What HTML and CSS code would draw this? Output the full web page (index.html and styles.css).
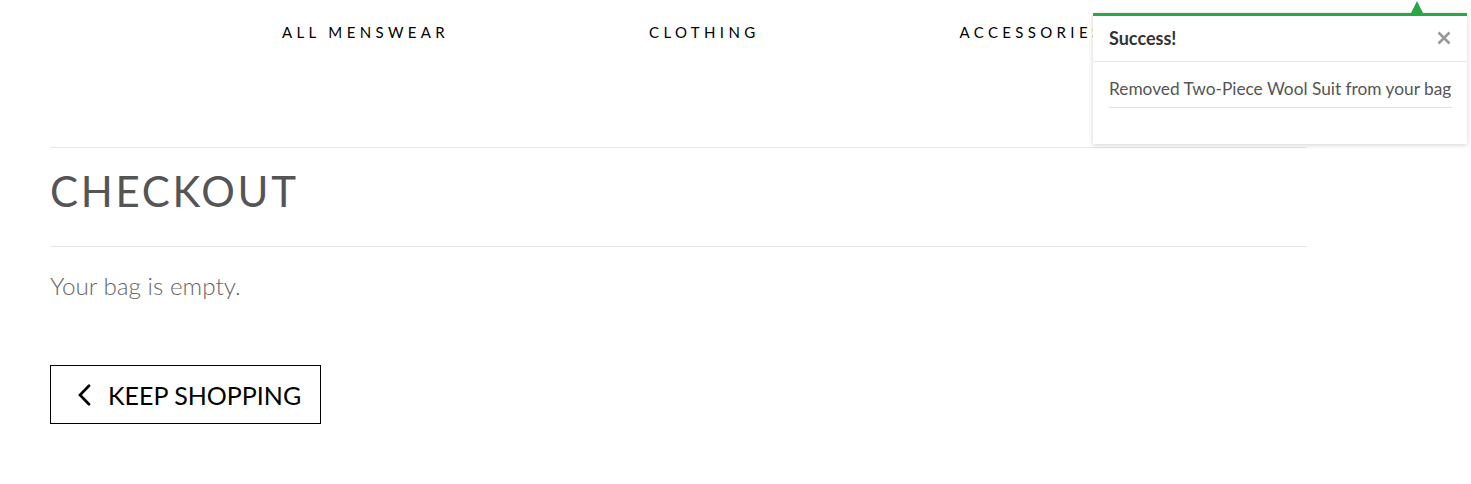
FILE: index.html
```html
<!DOCTYPE html>
<html lang="en">
<head>
<meta charset="utf-8">
<title>Checkout</title>
<link rel="stylesheet" href="styles.css">
</head>
<body>
<header class="site-header">
  <nav class="main-nav">
    <a class="nav-link" href="#">ALL MENSWEAR</a>
    <a class="nav-link" href="#">CLOTHING</a>
    <a class="nav-link" href="#">ACCESSORIES</a>
  </nav>
</header>

<main class="container">
  <section class="page-title">
    <h1>CHECKOUT</h1>
  </section>
  <p class="empty-msg">Your bag is empty.</p>
  <a class="btn-keep" href="#">
    <svg class="chev" width="13" height="22" viewBox="0 0 13 22" aria-hidden="true">
      <path d="M11 1.8 L2 11 L11 20.2" fill="none" stroke="#000" stroke-width="2.7" stroke-linecap="round" stroke-linejoin="miter"/>
    </svg>
    <span>KEEP SHOPPING</span>
  </a>
</main>

<div class="toast">
  <span class="toast-arrow"></span>
  <div class="toast-head">
    <strong>Success!</strong>
    <svg class="toast-close" width="14" height="14" viewBox="0 0 14 14" aria-label="Close">
      <path d="M1.5 1.5 L12.5 12.5 M12.5 1.5 L1.5 12.5" fill="none" stroke="#999" stroke-width="2.6" stroke-linecap="butt"/>
    </svg>
  </div>
  <div class="toast-body">
    <p class="toast-msg">Removed Two-Piece Wool Suit from your bag</p>
  </div>
</div>
</body>
</html>
```

FILE: styles.css
```css
* { box-sizing: border-box; }
html, body { margin: 0; padding: 0; background: #fff; }
body { font-family: Lato, "Open Sans", sans-serif; color: #333; }

.site-header { height: 64px; }
.main-nav {
  display: flex;
  align-items: center;
  height: 63px;
  padding-left: 282px;
  gap: 200px;
}
.nav-link {
  font-size: 15px;
  letter-spacing: 4.35px;
  color: #000;
  text-decoration: none;
  font-weight: 400;
}

.container {
  width: 1257px;
  margin: 83px 0 0 50px;
}
.page-title {
  border-top: 1px solid #e6e6e6;
  border-bottom: 1px solid #e6e6e6;
  padding: 17px 0 28px;
}
.page-title h1 {
  margin: 0;
  font-size: 42px;
  line-height: 53px;
  font-weight: 400;
  letter-spacing: 2.7px;
  color: #555;
}
.empty-msg {
  margin: 24px 0 0;
  font-size: 24.3px;
  line-height: 30px;
  font-weight: 300;
  color: #666;
}
.btn-keep {
  display: inline-flex;
  align-items: center;
  margin-top: 64px;
  width: 271px;
  height: 59px;
  border: 1px solid #000;
  padding-left: 27px;
  color: #000;
  text-decoration: none;
  font-size: 25px;
  font-weight: 400;
}
.btn-keep .chev { margin-right: 17px; }

.toast {
  position: absolute;
  top: 13px;
  left: 1093px;
  width: 374px;
  height: 131px;
  background: #fff;
  border-top: 3px solid #28a745;
  box-shadow: 0 1px 5px rgba(0,0,0,0.18);
}
.toast-arrow {
  position: absolute;
  top: -15px;
  left: 318px;
  width: 0;
  height: 0;
  border-left: 6px solid transparent;
  border-right: 6px solid transparent;
  border-bottom: 12px solid #28a745;
}
.toast-head {
  display: flex;
  align-items: center;
  justify-content: space-between;
  height: 46px;
  padding: 0 16px 2px;
  border-bottom: 1px solid #e8e8e8;
}
.toast-head strong {
  font-size: 18px;
  font-weight: 700;
  color: #333;
}
.toast-close { margin-right: 0; margin-top: 1px; }
.toast-body { padding: 15px 15px 0 16px; }
.toast-msg {
  margin: 0;
  font-size: 17.3px;
  line-height: 24px;
  color: #555;
  padding-bottom: 6px;
  border-bottom: 1px solid #e0e0e0;
  white-space: nowrap;
}
```
